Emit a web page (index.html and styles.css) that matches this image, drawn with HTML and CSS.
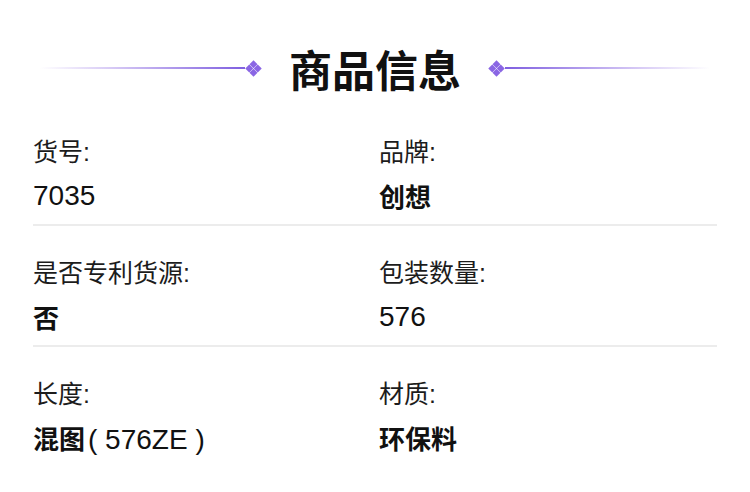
FILE: index.html
```html
<!DOCTYPE html>
<html lang="zh-CN">
<head>
<meta charset="utf-8">
<title>商品信息</title>
<link rel="stylesheet" href="styles.css">
</head>
<body>
<div class="page">
  <header class="heading">
    <span class="rule rule-left"></span>
    <svg class="gem" viewBox="0 0 18 18" aria-hidden="true">
      <g fill="#8a66e4">
        <path d="M9 0.3 L13.2 4.5 L9 8.7 L4.8 4.5 Z"/>
        <path d="M4.5 4.8 L8.7 9 L4.5 13.2 L0.3 9 Z"/>
        <path d="M13.5 4.8 L17.7 9 L13.5 13.2 L9.3 9 Z"/>
        <path d="M9 9.3 L13.2 13.5 L9 17.7 L4.8 13.5 Z"/>
      </g>
    </svg>
    <h1 class="title">商品信息</h1>
    <svg class="gem" viewBox="0 0 18 18" aria-hidden="true">
      <g fill="#8a66e4">
        <path d="M9 0.3 L13.2 4.5 L9 8.7 L4.8 4.5 Z"/>
        <path d="M4.5 4.8 L8.7 9 L4.5 13.2 L0.3 9 Z"/>
        <path d="M13.5 4.8 L17.7 9 L13.5 13.2 L9.3 9 Z"/>
        <path d="M9 9.3 L13.2 13.5 L9 17.7 L4.8 13.5 Z"/>
      </g>
    </svg>
    <span class="rule rule-right"></span>
  </header>

  <section class="specs">
    <div class="row">
      <div class="cell">
        <div class="label">货号:</div>
        <div class="value">7035</div>
      </div>
      <div class="cell">
        <div class="label">品牌:</div>
        <div class="value strong">创想</div>
      </div>
    </div>
    <div class="row">
      <div class="cell">
        <div class="label">是否专利货源:</div>
        <div class="value strong">否</div>
      </div>
      <div class="cell">
        <div class="label">包装数量:</div>
        <div class="value">576</div>
      </div>
    </div>
    <div class="row last">
      <div class="cell">
        <div class="label">长度:</div>
        <div class="value strong">混图<span class="latin">(&nbsp;576ZE&nbsp;)</span></div>
      </div>
      <div class="cell">
        <div class="label">材质:</div>
        <div class="value strong">环保料</div>
      </div>
    </div>
  </section>
</div>
</body>
</html>
```

FILE: styles.css
```css
* {
  box-sizing: border-box;
}

html, body {
  margin: 0;
  padding: 0;
  background: #ffffff;
}

body {
  font-family: "Liberation Sans", "Noto Sans CJK SC", sans-serif;
  color: #111111;
}

.page {
  width: 750px;
  height: 492px;
  overflow: hidden;
}

.heading {
  display: flex;
  align-items: flex-start;
  padding: 38px 40px 0;
  height: 105px;
}

.rule {
  flex: 1;
  height: 2px;
  margin-top: 29px;
}

.rule-left {
  background: linear-gradient(to right, rgba(139, 102, 227, 0), rgba(139, 102, 227, 0.35) 35%, #7f5fe0);
}

.rule-right {
  background: linear-gradient(to left, rgba(139, 102, 227, 0), rgba(139, 102, 227, 0.35) 35%, #7f5fe0);
}

.gem {
  width: 17px;
  height: 17px;
  flex: none;
  margin-top: 21.5px;
}

.title {
  margin: 0 27px;
  font-family: "Noto Sans CJK SC", sans-serif;
  font-size: 43px;
  font-weight: 700;
  line-height: 60px;
  color: #111111;
}

.specs {
  padding: 0 33px;
}

.row {
  display: grid;
  grid-template-columns: 346px 1fr;
  padding: 30px 0 10px;
  border-bottom: 2px solid #ececec;
  height: 121px;
}

.row.last {
  border-bottom: none;
}

.cell {
  display: flex;
  flex-direction: column;
  gap: 8px;
}

.label {
  font-size: 25px;
  line-height: 34px;
  color: #1c1c1c;
}

.value {
  font-size: 28px;
  line-height: 38px;
  color: #111111;
}

.value.strong {
  font-family: "Noto Sans CJK SC", sans-serif;
  font-weight: 700;
  font-size: 26px;
}

.latin {
  font-family: "Liberation Sans", sans-serif;
  font-weight: 400;
  font-size: 28px;
  margin-left: 3px;
}
```
